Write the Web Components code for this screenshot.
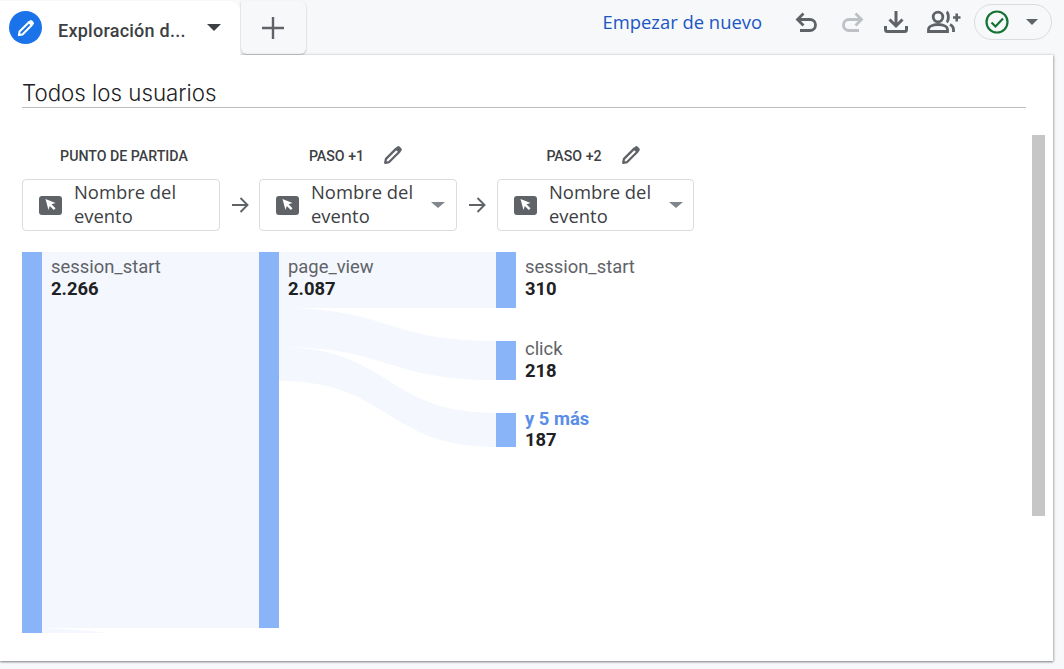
<!DOCTYPE html>
<html lang="es">
<head>
<meta charset="utf-8">
<title>Exploración</title>
<style>
html, body { margin: 0; height: 100%; overflow: hidden; background: #f7f8fa; font-family: Roboto, "Liberation Sans", sans-serif; }
</style>
</head>
<body>
<ga-toolbar>
  <ga-tab>Exploración d...</ga-tab>
  <ga-add-tab></ga-add-tab>
  <ga-actions>Empezar de nuevo</ga-actions>
</ga-toolbar>
<ga-card title-text="Todos los usuarios">
  <ga-steps>
    <ga-step label="PUNTO DE PARTIDA" fixed>Nombre del evento</ga-step>
    <ga-arrow></ga-arrow>
    <ga-step label="PASO +1">Nombre del evento</ga-step>
    <ga-arrow wide></ga-arrow>
    <ga-step label="PASO +2">Nombre del evento</ga-step>
  </ga-steps>
  <ga-sankey>
    <ga-node style="left:0;top:0" name="session_start" value="2.266"></ga-node>
    <ga-node style="left:237px;top:0" name="page_view" value="2.087"></ga-node>
    <ga-node style="left:474px;top:0" name="session_start" value="310"></ga-node>
    <ga-node style="left:474px;top:82px" name="click" value="218"></ga-node>
    <ga-node style="left:474px;top:153px" name="y 5 más" value="187" more></ga-node>
  </ga-sankey>
</ga-card>

<script>
// small helper, every element gets an open shadow root from its template
function makeTemplate(html) {
  var t = document.createElement("template");
  t.innerHTML = html;
  return t;
}

// hollow body, solid head, same shape in the tab badge and the step headers
var PENCIL = '<path d="M3.500 20.500l.8-4.300L15.500 5l3.500 3.500L7.800 19.700z" fill="none" stroke="currentColor" stroke-width="2.500" stroke-linejoin="round"/><path d="M15 4.500l1.500-1.500a2 2 0 0 1 2.800 0l1.700 1.700a2 2 0 0 1 0 2.800L19.500 9z" fill="currentColor"/>';

var toolbarTpl = makeTemplate(`
<style>
:host { display: flex; height: 55px; align-items: flex-start; box-sizing: border-box; }
</style>
<slot></slot>`);

var tabTpl = makeTemplate(`
<style>
:host { display: flex; align-items: center; box-sizing: border-box; width: 240px; height: 54px; margin-top: 1px;
  background: #fff; border-radius: 0 10px 0 0; position: relative; z-index: 1; padding-left: 9px;
  font: 500 18px Roboto, sans-serif; letter-spacing: .25px; color: #3c4043; }
.badge { width: 33px; height: 33px; border-radius: 50%; background: #1a73e8; color: #fff; display: flex; align-items: center; justify-content: center; flex: none; margin-top: -1px; }
.label { margin-left: 16px; width: 149px; white-space: nowrap; margin-top: 5px; }
.caret { width: 0; height: 0; border-left: 7px solid transparent; border-right: 7px solid transparent; border-top: 7px solid #3c4043; margin-top: -2px; }
</style>
<span class="badge"><svg width="20" height="20" viewBox="0 0 24 24">${PENCIL}</svg></span>
<span class="label"><slot></slot></span>
<span class="caret"></span>`);

var addTpl = makeTemplate(`
<style>
:host { display: flex; align-items: center; justify-content: center; width: 65px; height: 53px; margin: 1px 0 0 1px; box-sizing: border-box; padding-right: 2px;
  background: #f7f8fa; border-radius: 0 6px 6px 6px; box-shadow: 0 1px 2px rgba(60,64,67,.35); color: #5f6368; }
</style>
<svg width="24" height="24" viewBox="0 0 24 24"><path d="M12 1v22M1 12h22" stroke="currentColor" stroke-width="2.400"/></svg>`);

var actionsTpl = makeTemplate(`
<style>
:host { display: flex; align-items: center; margin-left: auto; height: 44px; color: #5f6368; padding-right: 12px; }
.reset { font: 500 18.400px "Open Sans", sans-serif; color: #1a56c4; margin-right: 32px; white-space: nowrap; margin-top: -1px; }
svg { display: block; flex: none; }
.undo { margin-right: 23px; }
.redo { margin-right: 19px; color: #bdc1c6; }
.down { margin-right: 19px; }
.share { margin-right: 13px; }
.status { display: flex; align-items: center; box-sizing: border-box; width: 78px; height: 36px; border: 1px solid #dadce0; border-radius: 18px; padding-left: 10px; }
.caret { width: 0; height: 0; border-left: 6px solid transparent; border-right: 6px solid transparent; border-top: 6px solid #5f6368; margin-left: 17px; }
</style>
<span class="reset"><slot></slot></span>
<svg class="undo" width="24" height="24" viewBox="0 0 24 24" fill="none" stroke="currentColor" stroke-width="2.800"><path d="M9.500 3.500L3.500 9.500l6 6M3.500 9.500H16a5 5 0 0 1 0 11H6"/></svg>
<svg class="redo" width="24" height="24" viewBox="0 0 24 24" fill="none" stroke="currentColor" stroke-width="2.800"><path d="M14.500 3.500l6 6-6 6M20.500 9.500H8a5 5 0 0 0 0 11h10"/></svg>
<svg class="down" width="24" height="24" viewBox="0 0 24 24" fill="none" stroke="currentColor" stroke-width="3"><path d="M12 1v15M5.500 9.500L12 16l6.500-6.500M1.500 16v3.500a2 2 0 0 0 2 2h17a2 2 0 0 0 2-2V16"/></svg>
<svg class="share" width="34" height="24" viewBox="0 0 34 24" fill="none" stroke="currentColor" stroke-width="2.800"><circle cx="11" cy="7" r="4.800"/><path d="M1.500 21.500v-2c0-3 4-5 9.500-5s9.500 2 9.500 5v2zM19.500 2c2.500 1.200 2.500 8.800 0 10M23 14.500c2 1 3.500 2.500 3.500 5V22"/><path d="M26 7.500h7.500M29.700 3.500v8" stroke-width="2.600"/></svg>
<span class="status">
  <svg width="24" height="24" viewBox="0 0 24 24" fill="none" stroke="#137333" stroke-width="2.200"><circle cx="12" cy="12" r="10.500"/><path d="M6.500 12.500l4 4 7.500-8"/></svg>
  <span class="caret"></span>
</span>`);

var cardTpl = makeTemplate(`
<style>
:host { display: block; position: relative; box-sizing: border-box; width: 1053px; height: 606px; background: #fff;
  box-shadow: 0 1px 2px rgba(60,64,67,.6), 1px 0 3px rgba(60,64,67,.2); padding: 0 27px 0 22px; }
.title { box-sizing: border-box; height: 53px; border-bottom: 1px solid #bdbdbd; padding-top: 22px;
  font: 350 22.300px/32px Inter, sans-serif; color: #202124; white-space: nowrap; }
.bar { position: absolute; left: 1032px; top: 80px; width: 13px; height: 381px; background: #c6c6c6; }
</style>
<div class="title"></div>
<slot></slot>
<div class="bar"></div>`);

var stepsTpl = makeTemplate(`
<style>
:host { display: flex; margin-top: 37px; }
</style>
<slot></slot>`);

var stepTpl = makeTemplate(`
<style>
:host { display: block; width: 198px; flex: none; }
:host(:last-child) { width: 197px; }
.head { display: flex; justify-content: center; align-items: center; height: 20px; gap: 18px; margin-bottom: 14px; padding-right: 3px;
  font: 500 14.200px Roboto, sans-serif; color: #3c4043; white-space: nowrap; }
.lbl { margin-top: 2px; }
:host([fixed]) .head { padding: 0 0 0 6px; }
.head svg { color: #5f6368; display: block; }
.box { box-sizing: border-box; height: 52px; border: 1px solid #dadce0; border-radius: 4px; display: flex; align-items: center; padding-left: 16px; }
.ico { flex: none; width: 23px; height: 19px; border-radius: 3px; background: #5f6368; display: flex; align-items: center; justify-content: center; }
.txt { margin-left: 12px; width: 117px; margin-top: -2px; font: 400 18.400px/24px "Open Sans", sans-serif; color: #3c4043; }
.caret { width: 0; height: 0; border-left: 7px solid transparent; border-right: 7px solid transparent; border-top: 6px solid #80868b; margin-left: 3px; }
:host([fixed]) .caret, :host([fixed]) .pen { display: none; }
</style>
<div class="head"><span class="lbl"></span><svg class="pen" width="22" height="22" viewBox="0 0 24 24">${PENCIL}</svg></div>
<div class="box">
  <span class="ico"><svg width="14" height="14" viewBox="0 0 14 14"><path d="M1.500 1l10 4-4 1.300 4 4-1.700 1.700-4-4L4.500 12z" fill="#fff"/></svg></span>
  <span class="txt"><slot></slot></span>
  <span class="caret"></span>
</div>`);

var arrowTpl = makeTemplate(`
<style>
:host { display: flex; flex: none; width: 39px; height: 52px; align-self: flex-end; align-items: center; justify-content: center; color: #5f6368; }
:host([wide]) { width: 40px; }
</style>
<svg width="18" height="18" viewBox="0 0 18 18" fill="none" stroke="currentColor" stroke-width="1.900"><path d="M1 9h15.500M9.500 2l7 7-7 7"/></svg>`);

var sankeyTpl = makeTemplate(`
<style>
:host { display: block; position: relative; margin-top: 21px; height: 381px; }
svg { position: absolute; left: 0; top: 0; display: block; }
</style>
<svg width="520" height="381" viewBox="22 252 520 381">
  <g fill="#f4f7fe">
    <rect x="42" y="252" width="217" height="376"/>
    <path d="M42 628C70 629 90 631 108 633H42z"/>
    <rect x="279" y="252" width="217" height="56"/>
    <path d="M279 308C390 308 385 341 496 341V380C385 380 390 347 279 347z"/>
    <path d="M279 347C390 347 385 413 496 413V447C385 447 390 381 279 381z"/>
  </g>
  <g fill="#8ab4f8">
    <rect x="22" y="252" width="20" height="381"/>
    <rect x="259" y="252" width="20" height="376"/>
    <rect x="496" y="252" width="20" height="56"/>
    <rect x="496" y="341" width="20" height="39"/>
    <rect x="496" y="413" width="20" height="34"/>
  </g>
</svg>
<slot></slot>`);

var nodeTpl = makeTemplate(`
<style>
:host { display: block; position: absolute; padding: 3px 0 0 29px; white-space: nowrap; }
.name { font: 400 18.400px/24px Roboto, sans-serif; color: #5f6368; }
.val { font: 700 18.400px/20px Roboto, sans-serif; color: #202124; }
:host([more]) .name { font-weight: 700; color: #5a8ee8; line-height: 22px; }
</style>
<div class="name"></div>
<div class="val"></div>`);

class GaBase extends HTMLElement {
  constructor(tpl) {
    super();
    this.attachShadow({ mode: "open" });
    this.shadowRoot.appendChild(tpl.content.cloneNode(true));
  }
}

class GaToolbar extends GaBase { constructor() { super(toolbarTpl); } }
class GaTab extends GaBase { constructor() { super(tabTpl); } }
class GaAddTab extends GaBase { constructor() { super(addTpl); } }
class GaActions extends GaBase { constructor() { super(actionsTpl); } }
class GaSteps extends GaBase { constructor() { super(stepsTpl); } }
class GaArrow extends GaBase { constructor() { super(arrowTpl); } }
class GaSankey extends GaBase { constructor() { super(sankeyTpl); } }

class GaCard extends GaBase {
  constructor() { super(cardTpl); }
  connectedCallback() {
    this.shadowRoot.querySelector(".title").textContent = this.getAttribute("title-text");
  }
}

class GaStep extends GaBase {
  constructor() { super(stepTpl); }
  connectedCallback() {
    this.shadowRoot.querySelector(".lbl").textContent = this.getAttribute("label");
  }
}

class GaNode extends GaBase {
  constructor() { super(nodeTpl); }
  connectedCallback() {
    this.shadowRoot.querySelector(".name").textContent = this.getAttribute("name");
    this.shadowRoot.querySelector(".val").textContent = this.getAttribute("value");
  }
}

customElements.define("ga-toolbar", GaToolbar);
customElements.define("ga-tab", GaTab);
customElements.define("ga-add-tab", GaAddTab);
customElements.define("ga-actions", GaActions);
customElements.define("ga-card", GaCard);
customElements.define("ga-steps", GaSteps);
customElements.define("ga-step", GaStep);
customElements.define("ga-arrow", GaArrow);
customElements.define("ga-sankey", GaSankey);
customElements.define("ga-node", GaNode);
</script>
</body>
</html>
